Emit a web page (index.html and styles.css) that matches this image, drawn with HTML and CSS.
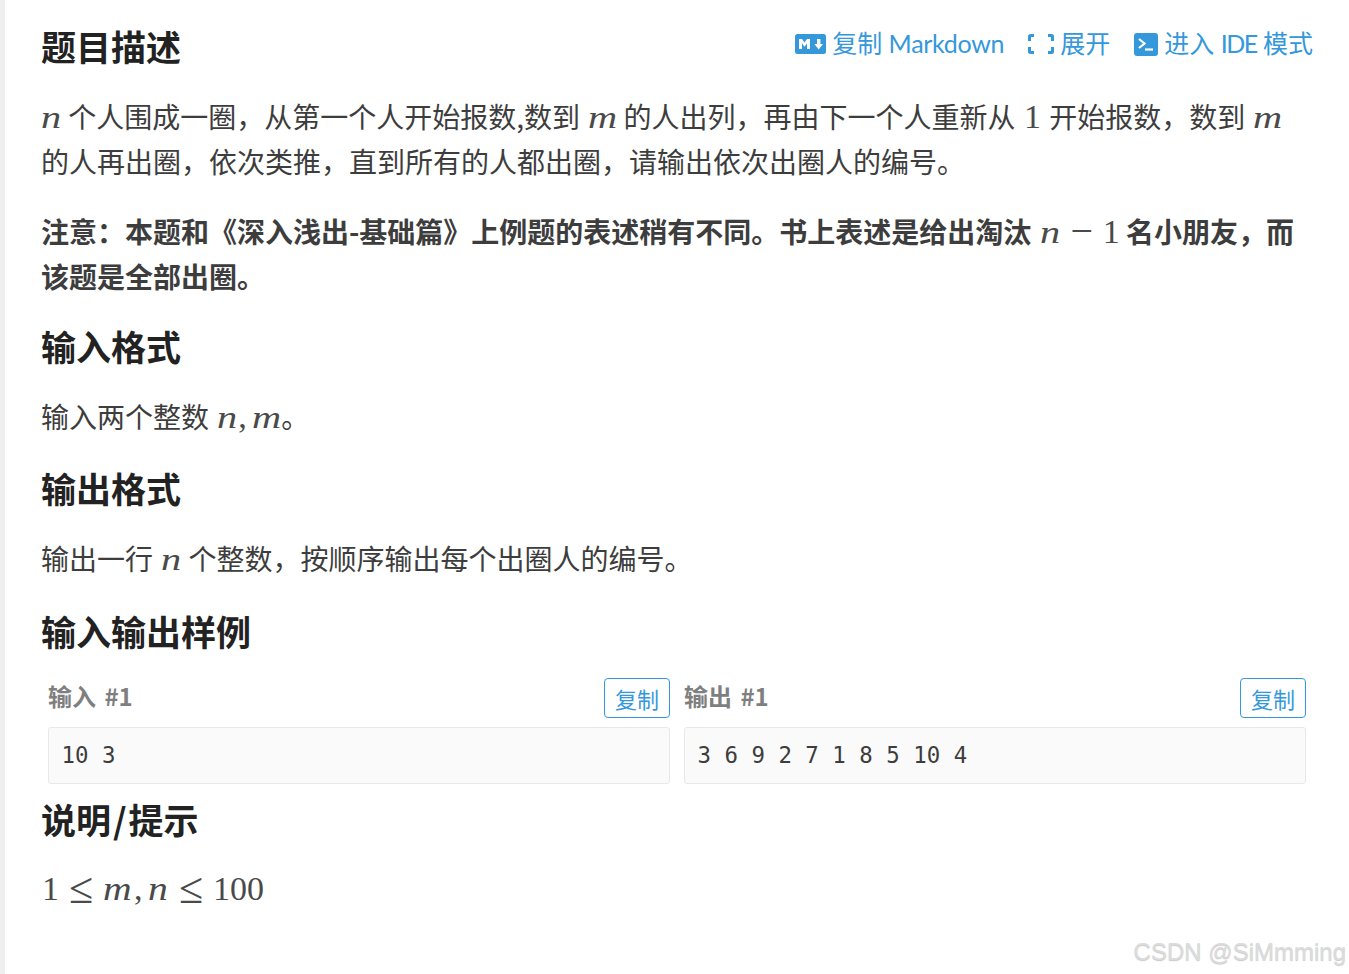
FILE: index.html
```html
<!DOCTYPE html>
<html lang="zh-CN">
<head>
<meta charset="utf-8">
<title>题目描述</title>
<link rel="stylesheet" href="styles.css">
</head>
<body>
<main class="card">
  <header class="title-row">
    <h2>题目描述</h2>
    <nav class="actions">
      <a class="action">
        <svg class="icon md" viewBox="0 0 31 20"><rect width="31" height="20" rx="2.500" fill="#3498db"/><path d="M4 15V5h3l2.500 3.600L12 5h3v10h-3V9.500l-2.500 3.200L7 9.500V15z" fill="#fff"/><path d="M22 5h3.400v5H28l-4.300 5.400L19.400 10H22z" fill="#fff"/></svg>
        <span>复制 <span class="tight-a">Markdown</span></span>
      </a>
      <a class="action">
        <svg class="icon ex" viewBox="0 0 26 20"><path d="M1.500 7V2.500a1 1 0 0 1 1-1H6M20 1.500h3.500a1 1 0 0 1 1 1V7M24.500 13v4.500a1 1 0 0 1-1 1H20M6 18.500H2.500a1 1 0 0 1-1-1V13" fill="none" stroke="#3498db" stroke-width="3"/></svg>
        <span>展开</span>
      </a>
      <a class="action">
        <svg class="icon tm" viewBox="0 0 24 23"><rect width="24" height="23" rx="3" fill="#3498db"/><path d="M5 6l5.500 4.500L5 15" fill="none" stroke="#fff" stroke-width="2.200"/><path d="M11 16.500h8" stroke="#fff" stroke-width="2.200"/></svg>
        <span>进入 <span class="tight-b">IDE</span> 模式</span>
      </a>
    </nav>
  </header>
  <p class="para"><i class="m vn lead">n</i> 个人围成一圈，从第一个人开始报数,数到 <i class="m vm">m</i> 的人出列，再由下一个人重新从 <span class="mr one">1</span> 开始报数，数到 <i class="m vm">m</i> 的人再出圈，依次类推，直到所有的人都出圈，请输出依次出圈人的编号。</p>
  <p class="para strong">注意：本题和《深入浅出-基础篇》上例题的表述稍有不同。书上表述是给出淘汰 <i class="m vn">n</i><span class="mr minus">−</span><span class="mr">1</span> 名小朋友，而该题是全部出圈。</p>
  <h2 class="sec sec-in">输入格式</h2>
  <p class="para">输入两个整数 <i class="m vn">n</i><span class="mr comma">,</span><i class="m vm">m</i>。</p>
  <h2 class="sec sec-out">输出格式</h2>
  <p class="para">输出一行 <i class="m vn">n</i> 个整数，按顺序输出每个出圈人的编号。</p>
  <h2 class="sec sec-sample">输入输出样例</h2>
  <section class="samples">
    <div class="sample">
      <div class="sample-head"><h3>输入 #1</h3><button class="copy">复制</button></div>
      <pre class="code">10 3</pre>
    </div>
    <div class="sample">
      <div class="sample-head"><h3>输出 #1</h3><button class="copy">复制</button></div>
      <pre class="code">3 6 9 2 7 1 8 5 10 4</pre>
    </div>
  </section>
  <h2 class="sec sec-hint">说明<span class="slash">/</span>提示</h2>
  <p class="para formula"><span class="mr">1</span><span class="mr le">≤</span><i class="m vm">m</i><span class="mr comma">,</span><i class="m vn">n</i><span class="mr le">≤</span><span class="mr">100</span></p>
</main>
<div class="watermark">CSDN @SiMmming</div>
</body>
</html>
```
FILE: styles.css
```css
html, body { margin: 0; height: 100%; background: #fff; }
body {
  width: 1349px;
  height: 974px;
  overflow: hidden;
  position: relative;
  font-family: "Noto Sans CJK SC", "Noto Sans", sans-serif;
  color: #3d3d3d;
}
.card {
  margin-left: 5px;
  height: 974px;
  box-sizing: border-box;
  padding: 20px 36px 0 36px;
  background: #fff;
  box-shadow: -5px 0 0 #efefef;
}
h2 {
  margin: 0;
  font-size: 35px;
  line-height: 52px;
  font-weight: 700;
  color: #222;
}
.slash { padding: 0 2px; }
.title-row { display: flex; justify-content: space-between; align-items: flex-start; }
.actions { display: flex; gap: 24px; }
.action {
  display: flex;
  align-items: center;
  gap: 6px;
  font-family: "Lato", "Noto Sans CJK SC", sans-serif;
  font-size: 25px;
  line-height: 48px;
  color: #3498db;
}
.action span { position: relative; top: -1px; }
.action span span { top: 0; }
.tight-a { letter-spacing: -0.300px; }
.tight-b { letter-spacing: -1.500px; }
.icon { flex: none; }
.md { width: 31px; height: 20px; }
.ex { width: 26px; height: 20px; }
.tm { width: 24px; height: 23px; }
.para {
  margin: 0;
  font-size: 28px;
  line-height: 45px;
  color: #3d3d3d;
  padding-top: 22px;
  max-width: 1265px;
}
.strong { font-weight: 700; padding-top: 25px; }
.m, .mr { font-family: "Liberation Serif", serif; font-weight: 400; line-height: 0; color: #4a4a4a; }
.mr { font-size: 34px; }
.one { margin: 0 2px; }
.m {
  display: inline-block;
  margin-left: 2px;
  font-size: 31px;
  font-style: italic;
  transform: scaleX(1.3);
  transform-origin: left center;
}
.m.lead { margin-left: 0; }
.vn { width: 21px; }
.vm { width: 29px; }
.minus { display: inline-block; width: 42px; text-align: center; font-size: 40px; vertical-align: -1px; }
.comma { display: inline-block; width: 12px; }
.sec-in { margin-top: 21px; }
.sec-out { margin-top: 23px; }
.sec-sample { margin-top: 24px; }
.sec-hint { margin-top: 9px; }
.samples { display: flex; gap: 14px; margin: 21px 0 0 7px; width: 1258px; }
.sample { flex: 1; min-width: 0; }
.sample-head { display: flex; justify-content: space-between; align-items: center; height: 40px; margin-bottom: 9px; }
.sample-head h3 { margin: 0 0 4px; font-size: 24px; font-weight: 700; color: #7f7f7f; line-height: 36px; word-spacing: 3px; }
.copy {
  width: 66px;
  height: 40px;
  padding: 0;
  background: #fff;
  border: 1px solid #3498db;
  border-radius: 4px;
  color: #3498db;
  font-family: inherit;
  font-size: 22px;
}
.code {
  margin: 0;
  height: 57px;
  box-sizing: border-box;
  padding: 0 12.500px;
  background: #fafafa;
  border: 1px solid #e8e8e8;
  border-radius: 3px;
  font-family: "DejaVu Sans Mono", monospace;
  font-size: 22.400px;
  line-height: 55px;
  color: #3d3d3d;
}
.formula { padding-top: 21px; padding-left: 1px; }
.formula .m { margin-left: 0; font-size: 33px; transform: scaleX(1.2); }
.formula .vm { width: 31px; }
.formula .vn { width: 21px; }
.formula .le { display: inline-block; width: 44px; text-align: center; font-size: 44px; vertical-align: -3px; }
.formula .comma { width: 14px; }
.watermark {
  position: absolute;
  right: 3px;
  bottom: 8px;
  font-family: "Liberation Sans", sans-serif;
  font-size: 24px;
  color: #dcdcdc;
  text-shadow: 0 1px 1px #c8c8c8;
}
```
